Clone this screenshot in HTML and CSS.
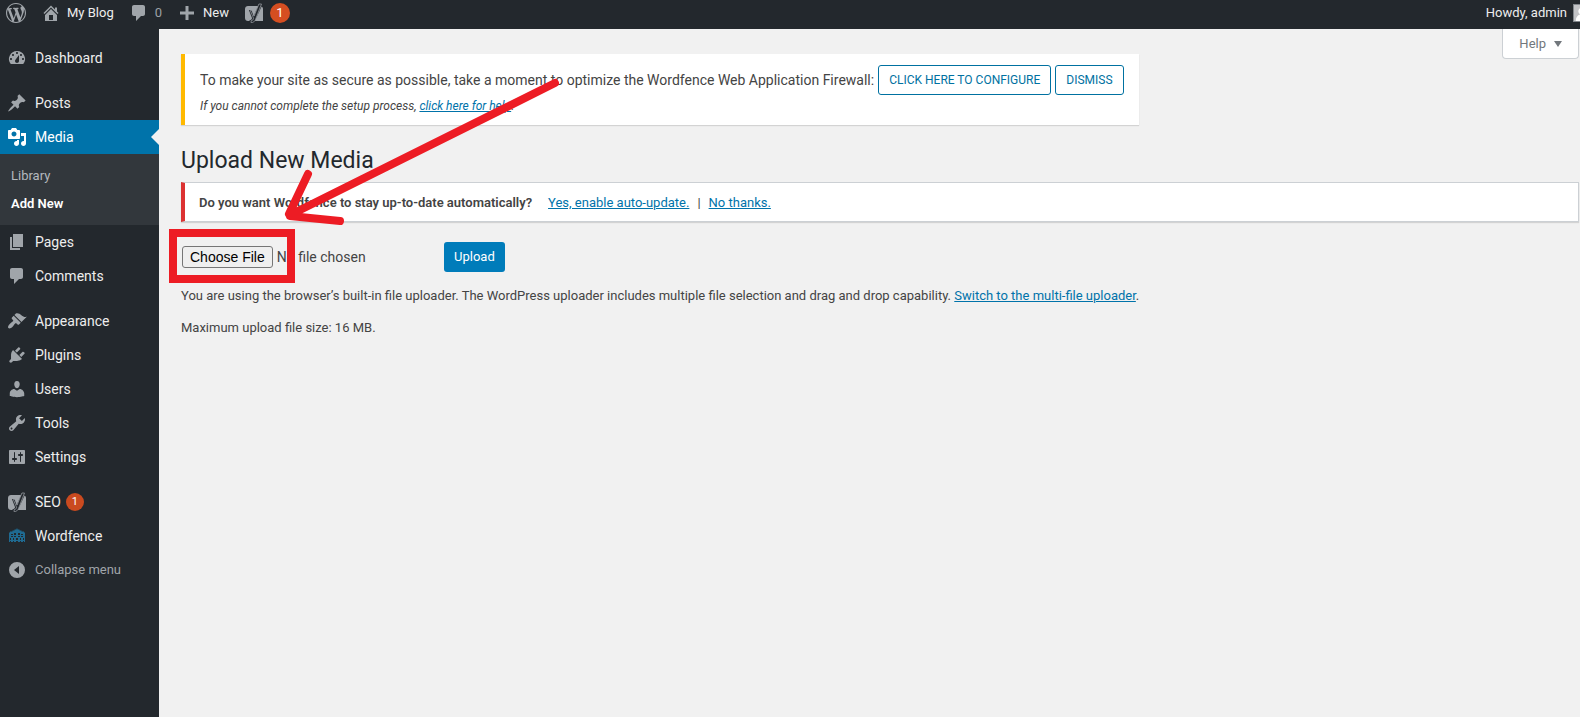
FILE: index.html
```html
<!DOCTYPE html>
<html lang="en">
<head>
<meta charset="utf-8">
<title>Upload New Media</title>
<link rel="stylesheet" href="styles.css">
</head>
<body>
<svg class="defs" aria-hidden="true">
  <symbol id="yoast" viewBox="0 0 20 20">
    <path d="M4 3h10L9.700 13 7.700 7H4.900l3.200 8.200c-.5 1.300-1.200 1.800-2.500 1.900V18H4c-1.700 0-3-1.200-3-3V6c0-1.700 1.300-3 3-3zM17.600 3.600c.9.500 1.400 1.300 1.400 2.400v12h-8.200c.5-.7.8-1.400 1.100-2.200z"/>
    <path d="M14.900 1h2.600l-6 15.500c-.8 2.100-2.200 3.100-4.400 3.200v-2c1.600-.2 2.200-1 2.400-2.500L6.300 7.500h1.800l2 5.600z" fill="none" stroke="currentColor" stroke-width=".7"/>
  </symbol>
</svg>
<header class="bar">
  <a class="bar-item" href="#" aria-label="WordPress"><svg class="icon" viewBox="0 0 20 20"><path d="M20 10c0-5.510-4.490-10-10-10C4.480 0 0 4.490 0 10c0 5.520 4.480 10 10 10 5.510 0 10-4.480 10-10zM7.780 15.370L4.370 6.220c.55-.02 1.170-.08 1.170-.08.5-.06.44-1.130-.06-1.110 0 0-1.450.11-2.370.11-.18 0-.37 0-.58-.01C4.120 2.690 6.870 1.110 10 1.110c2.330 0 4.450.87 6.050 2.340-.68-.11-1.650.39-1.650 1.580 0 .74.45 1.360.9 2.100.35.61.55 1.360.55 2.460 0 1.490-1.400 5-1.400 5l-3.030-8.370c.54-.02.82-.17.82-.17.5-.05.44-1.250-.06-1.220 0 0-1.440.12-2.380.12-.87 0-2.330-.12-2.330-.12-.5-.03-.56 1.200-.06 1.220l.92.08 1.260 3.410zM17.410 10c.24-.64.74-1.870.43-4.250.7 1.290 1.050 2.710 1.050 4.250 0 3.290-1.730 6.240-4.400 7.780.97-2.590 1.940-5.200 2.920-7.780zM6.100 18.090C3.120 16.650 1.110 13.530 1.110 10c0-1.300.23-2.480.72-3.590C3.250 10.300 4.670 14.200 6.100 18.090zm4.030-6.630l2.580 6.980c-.86.29-1.760.45-2.710.45-.79 0-1.570-.11-2.290-.33.81-2.380 1.620-4.740 2.420-7.100z"/></svg></a>
  <a class="bar-item" href="#"><svg class="icon" viewBox="0 0 20 20"><path d="M16 8.500l1.530 1.530-1.060 1.060L10 4.600l-6.470 6.490-1.060-1.060L10 2.500l4 4v-2h2v4zm-6-2.460l6 5.990V18H4v-5.970zM12 17v-5H8v5h4z"/></svg><span>My Blog</span></a>
  <a class="bar-item dim" href="#"><svg class="icon" viewBox="0 0 20 20"><path d="M5 2h9c1.100 0 2 .9 2 2v7c0 1.100-.9 2-2 2h-2l-5 5v-5H5c-1.100 0-2-.9-2-2V4c0-1.100.9-2 2-2z"/></svg><span>0</span></a>
  <a class="bar-item" href="#"><svg class="icon" viewBox="0 0 20 20"><path d="M17 8.500v3h-5.500V17h-3v-5.500H3v-3h5.500V3h3v5.500z"/></svg><span>New</span></a>
  <a class="bar-item" href="#" aria-label="SEO, 1 notification"><svg class="icon"><use href="#yoast"/></svg><b class="badge big">1</b></a>
  <a class="bar-item account" href="#"><span>Howdy, admin</span><svg class="avatar" viewBox="0 0 18 18"><path class="avatar-bg" d="M0 0h18v18H0z"/><path class="avatar-fg" d="M9 3a4 4 0 0 1 2 7.500c3 1 5 3 5 7.500H2c0-4.500 2-6.500 5-7.500A4 4 0 0 1 9 3z"/></svg></a>
</header>
<div class="layout">
<nav class="menu" aria-label="Main menu">
  <a class="item" href="#"><svg class="icon" viewBox="0 0 20 20"><path d="M3.760 16h12.480A7.998 7.998 0 0 0 10 3a7.998 7.998 0 0 0-6.240 13zM10 4c.55 0 1 .45 1 1s-.45 1-1 1-1-.45-1-1 .45-1 1-1zM6 6c.55 0 1 .45 1 1s-.45 1-1 1-1-.45-1-1 .45-1 1-1zm8 0c.55 0 1 .45 1 1s-.45 1-1 1-1-.45-1-1 .45-1 1-1zm-5.370 5.550L12 7v6c0 1.100-.9 2-2 2s-2-.9-2-2c0-.57.24-1.080.63-1.450zM4 10c.55 0 1 .45 1 1s-.45 1-1 1-1-.45-1-1 .45-1 1-1zm12 0c.55 0 1 .45 1 1s-.45 1-1 1-1-.45-1-1 .45-1 1-1z"/></svg>Dashboard</a>
  <a class="item first" href="#"><svg class="icon" viewBox="0 0 20 20"><path d="M10.440 3.020l1.820-1.820 6.360 6.350-1.830 1.820c-1.050-.68-2.480-.57-3.410.36l-.75.75c-.92.93-1.040 2.350-.35 3.410l-1.830 1.820-2.410-2.410-2.800 2.790c-.42.42-3.380 2.710-3.800 2.290s1.860-3.390 2.280-3.810l2.790-2.790L4.100 9.360l1.830-1.820c1.050.69 2.480.57 3.400-.36l.75-.75c.93-.92 1.050-2.350.36-3.410z"/></svg>Posts</a>
  <a class="item current" href="#"><svg class="icon" viewBox="0 0 20 20"><path d="M13 11V4c0-.55-.45-1-1-1h-1.670L9 1H5L3.670 3H2c-.55 0-1 .45-1 1v7c0 .55.45 1 1 1h10c.55 0 1-.45 1-1zM7 4.500c1.380 0 2.500 1.120 2.500 2.500S8.380 9.500 7 9.500 4.500 8.380 4.500 7 5.620 4.500 7 4.500zM14 6h5v10.500c0 1.380-1.120 2.500-2.500 2.500S14 17.880 14 16.500s1.120-2.500 2.500-2.500c.17 0 .34.02.5.05V9h-3V6zm-4 8.050V13h2v3.500c0 1.380-1.120 2.500-2.500 2.500S7 17.880 7 16.500 8.120 14 9.500 14c.17 0 .34.02.5.05z"/></svg>Media</a>
  <div class="submenu"><a href="#">Library</a><a class="active" href="#">Add New</a></div>
  <a class="item" href="#"><svg class="icon" viewBox="0 0 20 20"><path d="M6 15V2h10v13H6zm-1 1h8v2H3V5h2v11z"/></svg>Pages</a>
  <a class="item" href="#"><svg class="icon" viewBox="0 0 20 20"><path d="M5 2h9c1.100 0 2 .9 2 2v7c0 1.100-.9 2-2 2h-2l-5 5v-5H5c-1.100 0-2-.9-2-2V4c0-1.100.9-2 2-2z"/></svg>Comments</a>
  <a class="item first" href="#"><svg class="icon" viewBox="0 0 20 20"><path d="M14.480 11.060L7.410 3.990l1.500-1.500c.5-.56 2.300-.47 3.510.32 1.210.8 1.430 1.280 2.910 2.100 1.180.64 2.450 1.260 4.450.85zm-.71.71L6.700 4.700 4.930 6.470c-.39.39-.39 1.020 0 1.410l1.060 1.060c.39.39.39 1.030 0 1.420-.6.6-1.430 1.110-2.210 1.690-.35.26-.7.53-1.010.84C1.430 14.230.4 16.080 1.400 17.070c.99 1 2.840-.03 4.180-1.360.31-.31.58-.66.85-1.020.57-.78 1.080-1.610 1.690-2.210.39-.39 1.020-.39 1.410 0l1.060 1.060c.39.39 1.020.39 1.410 0z"/></svg>Appearance</a>
  <a class="item" href="#"><svg class="icon" viewBox="0 0 20 20"><path d="M13.110 4.360L9.870 7.600 8 5.730l3.240-3.240c.35-.34 1.050-.2 1.560.32.52.51.66 1.210.31 1.550zm-8 1.770l.91-1.120 9.010 9.010-1.190.84c-.71.71-2.630 1.160-3.820 1.160H6.140L4.900 17.260c-.59.59-1.540.59-2.120 0-.59-.58-.59-1.530 0-2.120l1.240-1.240v-3.880c0-1.130.4-3.190 1.090-3.890zm7.260 3.970l3.240-3.240c.34-.35 1.040-.21 1.550.31.52.51.66 1.210.31 1.550l-3.240 3.250z"/></svg>Plugins</a>
  <a class="item" href="#"><svg class="icon" viewBox="0 0 20 20"><path d="M10 9.250c-2.270 0-2.730-3.440-2.730-3.440C7 4.020 7.820 2 9.970 2c2.160 0 2.980 2.020 2.710 3.810 0 0-.41 3.440-2.680 3.440zm0 2.570L12.720 10c2.390 0 4.520 2.330 4.520 4.530v2.490s-3.650 1.130-7.240 1.130c-3.650 0-7.240-1.130-7.240-1.130v-2.490c0-2.250 1.940-4.480 4.470-4.480z"/></svg>Users</a>
  <a class="item" href="#"><svg class="icon" viewBox="0 0 20 20"><path d="M16.680 9.770c-1.340 1.340-3.300 1.670-4.950.99l-5.410 6.520c-.99.99-2.590.99-3.580 0s-.99-2.590 0-3.570l6.520-5.420c-.68-1.650-.35-3.610.99-4.950 1.280-1.280 3.120-1.620 4.720-1.060l-2.890 2.890 2.820 2.820 2.860-2.870c.53 1.580.18 3.390-1.080 4.650zM3.810 16.210c.4.39 1.040.39 1.430 0 .4-.4.4-1.040 0-1.430-.39-.4-1.030-.4-1.430 0-.39.39-.39 1.030 0 1.430z"/></svg>Tools</a>
  <a class="item" href="#"><svg class="icon" viewBox="0 0 20 20"><path d="M18 16V4c0-.55-.45-1-1-1H3c-.55 0-1 .45-1 1v12c0 .55.45 1 1 1h14c.55 0 1-.45 1-1zM8 11h1c.55 0 1 .45 1 1s-.45 1-1 1H8v1.500c0 .28-.22.5-.5.5s-.5-.22-.5-.5V13H6c-.55 0-1-.45-1-1s.45-1 1-1h1V5.500c0-.28.22-.5.5-.5s.5.22.5.5V11zm5-2h-1c-.55 0-1-.45-1-1s.45-1 1-1h1V5.500c0-.28.22-.5.5-.5s.5.22.5.5V7h1c.55 0 1 .45 1 1s-.45 1-1 1h-1v5.500c0 .28-.22.5-.5.5s-.5-.22-.5-.5V9z"/></svg>Settings</a>
  <a class="item first" href="#"><svg class="icon"><use href="#yoast"/></svg><span class="with-badge">SEO<b class="badge">1</b></span></a>
  <a class="item" href="#"><svg class="icon fence" viewBox="0 0 20 20"><path d="M2 16V7l2-2 1 1 1-2 1 1 1-2 1 1 1-2 1 2 1-1 1 2 1-1 1 2 1-1 2 2v9h-1v-4h-1v4h-2v-4h-1v4h-2v-4H9v4H7v-4H6v4H4v-4H3v4zM4 8v3h2V8zm3-1v4h2V7zm4 0v4h2V7zm3 1v3h2V8z"/><path d="M2 9h16v1H2zM2 14h16v1H2z"/></svg>Wordfence</a>
  <button class="item collapse" type="button"><svg class="icon" viewBox="0 0 20 20"><path fill-rule="evenodd" d="M10 2a8 8 0 1 0 0 16 8 8 0 0 0 0-16zm2 4v8l-5-4z"/></svg>Collapse menu</button>
</nav>
<main class="content">
  <button class="help" type="button">Help<span class="caret"></span></button>
  <section class="notice warning">
    <p class="notice-row"><span>To make your site as secure as possible, take a moment to optimize the Wordfence Web Application Firewall:</span><a class="btn" href="#">CLICK HERE TO CONFIGURE</a><a class="btn" href="#">DISMISS</a></p>
    <p class="hint">If you cannot complete the setup process, <a href="#">click here for help</a>.</p>
  </section>
  <h1>Upload New Media</h1>
  <section class="notice error"><p><strong>Do you want Wordfence to stay up-to-date automatically?</strong><a href="#">Yes, enable auto-update.</a><span>|</span><a href="#">No thanks.</a></p></section>
  <form class="upload">
    <input class="file" type="file" aria-label="Upload file">
    <button class="submit" type="button">Upload</button>
  </form>
  <p class="text">You are using the browser’s built-in file uploader. The WordPress uploader includes multiple file selection and drag and drop capability. <a href="#">Switch to the multi-file uploader</a>.</p>
  <p class="text">Maximum upload file size: 16 MB.</p>
</main>
</div>
<svg class="markup" width="400" height="220" viewBox="0 0 400 220" aria-hidden="true">
  <path d="M13 163h118v46H13z" stroke-linecap="butt"/>
  <path d="M395 13L130 145M148 104L129 144M130 146l50 5"/>
</svg>
</body>
</html>
```
FILE: styles.css
```css
* { box-sizing: border-box; }
body {
  margin: 0;
  min-height: 100vh;
  display: flex;
  flex-direction: column;
  overflow: hidden;
  background: #f1f1f1;
  color: #444;
  font: 13px/20px Roboto, "Open Sans", sans-serif;
}
button, input { font-family: inherit; }
p, h1 { margin: 0; }
a { color: #0073aa; }
.defs { position: absolute; width: 0; height: 0; }
.icon { flex: none; width: 20px; height: 20px; fill: currentColor; color: #a0a5aa; }

.bar { display: flex; align-items: center; height: 29px; padding: 0 0 3px 6px; gap: 15px; background: #23282d; }
.bar-item { display: flex; align-items: center; gap: 6px; color: #eee; text-decoration: none; white-space: nowrap; }
.bar-item.dim span { color: #9ca1a6; }
.account { margin-left: auto; margin-right: -11px; }
.avatar { width: 18px; height: 18px; border: 1px solid #82878c; }
.avatar-bg { fill: #c3c4c7; }
.avatar-fg { fill: #fff; }
.badge { width: 18px; height: 18px; border-radius: 50%; background: #ca4a1f; color: #fff; font-size: 11px; line-height: 18px; font-weight: 400; text-align: center; }
.badge.big { width: 20px; height: 20px; font-size: 13px; line-height: 20px; background: #d54e21; }

.layout { flex: 1; display: flex; }
.menu { flex: none; width: 159px; padding-top: 12px; background: #23282d; }
.item { position: relative; display: flex; align-items: center; gap: 8px; width: 100%; height: 34px; padding: 0 0 0 7px; border: 0; background: none; color: #eee; font-size: 14px; line-height: 18px; text-decoration: none; }
.item.first { margin-top: 11px; }
.with-badge { display: flex; gap: 5px; }
.current { background: #0073aa; color: #fff; }
.current .icon { color: #fff; }
.current::after { content: ""; position: absolute; right: 0; top: 9px; border: 8px solid transparent; border-left: 0; border-right-color: #f1f1f1; }
.submenu { display: flex; flex-direction: column; padding: 8px 0 7px 11px; background: #32373c; }
.submenu a { color: #b4b9be; line-height: 28px; text-decoration: none; }
.submenu .active { color: #fff; font-weight: 600; }
.item .fence { color: #1f6a91; }
.item.collapse { color: #a0a5aa; font-size: 13px; }

.content { flex: 1; position: relative; padding: 25px 1px 0 22px; }
.help { position: absolute; top: 0; right: 1px; display: flex; align-items: center; gap: 8px; height: 30px; padding: 0 16px; border: 1px solid #ccd0d4; border-top: 0; border-radius: 0 0 4px 4px; background: #fff; color: #72777c; font-size: 13px; line-height: 20px; }
.caret { border: 4px solid transparent; border-top: 6px solid #72777c; border-bottom: 0; }
.notice { border-left: 4px solid; background: #fff; box-shadow: 0 1px 1px rgba(0, 0, 0, .12); }
.warning { width: fit-content; height: 71px; padding: 11px 15px; border-color: #ffb900; }
.notice-row { display: flex; align-items: center; gap: 4px; font-size: 14px; white-space: nowrap; }
.btn { height: 30px; padding: 0 10px; border: 1px solid #0071a1; border-radius: 3px; color: #0071a1; font-size: 12px; line-height: 28px; text-decoration: none; }
.hint { font-size: 12px; line-height: 22px; font-style: italic; }
h1 { margin: 21px 0 7px; color: #23282d; font-size: 23px; line-height: 29px; font-weight: 400; }
.error { padding: 11px 14px 9px; border: 1px solid #ccd0d4; border-left: 4px solid #dc3232; }
.error p { display: flex; gap: 8px; line-height: 18px; }
.error strong { margin-right: 8px; font-weight: 600; }
.upload { display: flex; align-items: center; gap: 10px; margin: 20px 0 14px; padding-left: 1px; }
.file { width: 252px; color: #444; font-size: 14px; line-height: 20px; }
.file::file-selector-button { height: 22px; margin: 0 4px 0 0; padding: 0 7px; border: 1px solid #767676; border-radius: 3px; background: #efefef; color: #000; font: 14px/18px "Liberation Sans", Arial, sans-serif; }
.submit { height: 30px; padding: 0 10px; border: 0; border-radius: 3px; background: #007cba; color: #fff; font-size: 13px; line-height: 28px; }
.text { margin-bottom: 12px; }
.markup { position: absolute; left: 160px; top: 70px; pointer-events: none; fill: none; stroke: #ed1c24; stroke-width: 8; stroke-linecap: round; }
```
